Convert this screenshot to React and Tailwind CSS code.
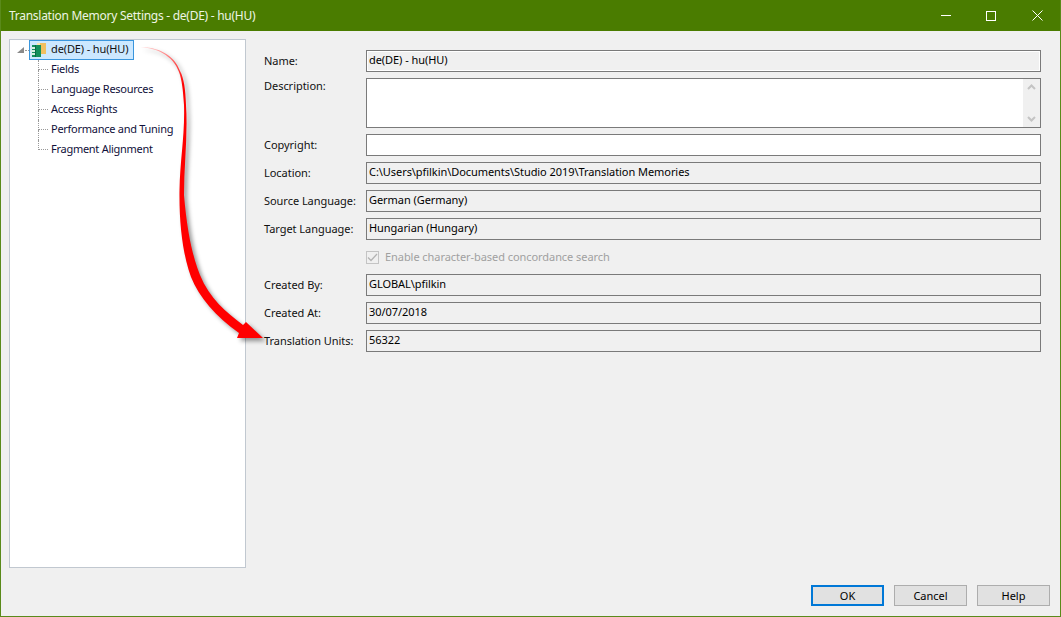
import React from "react";

const treeItems = ["Fields", "Language Resources", "Access Rights", "Performance and Tuning", "Fragment Alignment"];

function Field({ label, value, white }) {
    return (
        <div className="flex items-start">
            <div className="w-[102px] h-[22px] flex items-center text-[11px] text-[#111] tracking-[-0.04px]">{label}</div>
            <div className={`w-[675px] h-[22px] flex items-center border border-[#7a7a7a] pl-[2px] pb-[2px] text-[11px] text-black tracking-[-0.06px] ${white ? "bg-white" : "bg-[#f0f0f0]"}`}>
                {value}
            </div>
        </div>
    );
}

function DbIcon() {
    return (
        <svg width="15" height="14" viewBox="0 0 15 14" className="shrink-0">
            <rect x="6" y="0" width="3" height="11" fill="#fbe6b0" />
            <rect x="9" y="0" width="6" height="11" fill="#f0c060" />
            <rect x="1" y="2" width="9" height="12" fill="#12905c" />
            {/* binder notches */}
            <rect x="0" y="4" width="4" height="2" fill="#d6efe3" />
            <rect x="0" y="7" width="4" height="2" fill="#d6efe3" />
            <rect x="0" y="10" width="4" height="2" fill="#d6efe3" />
            <rect x="4" y="2" width="1" height="12" fill="#0b6b45" />
        </svg>
    );
}

function Tree() {
    return (
        <div className="w-[237px] h-[529px] shrink-0 bg-white border border-[#c1c8d0] text-[11px] text-[#10103a] tracking-[-0.27px]">
            {/* root node */}
            <div className="flex items-center h-5">
                <svg width="7" height="6" viewBox="0 0 7 6" className="ml-[7px] shrink-0">
                    <polygon points="7,0 7,6 0,6" fill="#8a8a8a" />
                </svg>
                <span className="w-[4px] ml-[1px] border-t border-dotted border-[#999]" />
                <div className="w-[105px] h-5 flex items-center bg-[#cce8ff] border border-[#3a96dd] pl-[1px]">
                    <DbIcon />
                    <span className="ml-[5px] text-[#111] pb-[1px] tracking-[-0.13px]">de(DE) - hu(HU)</span>
                </div>
            </div>
            {/* children */}
            {treeItems.map((t, i) => (
                <div key={t} className="flex items-center h-5 pl-[28px]">
                    <div className="w-[10px] h-5 flex flex-col shrink-0">
                        <div className="h-[10px] border-l border-b border-dotted border-[#999]" />
                        <div className={`h-[10px] border-dotted border-[#999] ${i < treeItems.length - 1 ? "border-l" : ""}`} />
                    </div>
                    <span className="ml-[3px] pb-[2px]">{t}</span>
                </div>
            ))}
        </div>
    );
}

function Arrow() {
    return (
        <svg width="1061" height="617" viewBox="0 0 1061 617" className="absolute left-0 top-0 pointer-events-none drop-shadow-[3px_3px_2px_rgba(0,0,0,0.4)]">
            <defs>
                <linearGradient id="fade" gradientUnits="userSpaceOnUse" x1="140" y1="47" x2="182" y2="85">
                    <stop offset="0" stopColor="#ffd8d8" />
                    <stop offset="0.6" stopColor="#ff6060" />
                    <stop offset="1" stopColor="#ff0000" />
                </linearGradient>
            </defs>
            <path
                d="M139,47 C155,48 172,55 178,72 C181,80 182,90 183,105 C184,135 179,160 178.5,190 C178,225 182,255 190,277 C198,297 215,317 238,333 L236,338 L262,338 L245,322 L242,325 C226,313 208,298 199,275 C191,255 186,230 183,195 C183,165 187,135 185,105 C184.5,90 183,78 179,71 C173,54 156,47 139,47 Z"
                fill="url(#fade)"
            />
        </svg>
    );
}

export default function App() {
    return (
        <div className="relative w-[1061px] h-[617px] flex flex-col bg-[#f0f0f0] border-x border-b border-[#5a8a1a] overflow-hidden font-['Noto_Sans',sans-serif]">
            {/* Title bar */}
            <div className="h-[31px] shrink-0 -mx-px flex items-center justify-between bg-[#4a7c00] text-white pl-[9px] pr-px">
                <span className="text-[12px] tracking-[-0.27px] text-[#eef5e4]">Translation Memory Settings - de(DE) - hu(HU)</span>
                <div className="flex items-center">
                    <div className="w-[45px] h-[31px] flex items-center justify-center">
                        <span className="w-[10px] border-t border-white" />
                    </div>
                    <div className="w-[46px] h-[31px] flex items-center justify-center">
                        <span className="w-[10px] h-[10px] border border-white" />
                    </div>
                    <div className="w-[46px] h-[31px] flex items-center justify-center">
                        <svg width="11" height="11" viewBox="0 0 11 11">
                            <path d="M0.5,0.5 L10.5,10.5 M10.5,0.5 L0.5,10.5" stroke="#fff" strokeWidth="1" fill="none" />
                        </svg>
                    </div>
                </div>
            </div>

            {/* Body */}
            <div className="h-[546px] pt-[8px] pl-[8px] flex">
                <Tree />
                <div className="ml-[18px] pt-[11px] flex flex-col gap-[6px]">
                    <div className="flex items-start">
                        <div className="w-[102px] h-[22px] flex items-center text-[11px] text-[#111] tracking-[-0.04px]">Name:</div>
                        <div className="w-[675px] h-[22px] flex items-center border border-[#7a7a7a] shadow-[inset_0_0_0_1px_#fff] pl-[2px] pb-[2px] text-[11px] text-black tracking-[-0.06px]">de(DE) - hu(HU)</div>
                    </div>
                    <div className="flex items-start">
                        <div className="w-[102px] h-[16px] flex items-center text-[11px] text-[#111] tracking-[-0.04px]">Description:</div>
                        <div className="w-[675px] h-[50px] flex justify-end border border-[#7a7a7a] bg-white">
                            <div className="w-[17px] h-full flex flex-col items-center justify-between bg-[#f0f0f0] py-[5px]">
                                <svg width="9" height="6" viewBox="0 0 9 6"><path d="M1,5 L4.5,1.5 L8,5" stroke="#c4c4c4" strokeWidth="2" fill="none" /></svg>
                                <svg width="9" height="6" viewBox="0 0 9 6"><path d="M1,1 L4.5,4.5 L8,1" stroke="#c4c4c4" strokeWidth="2" fill="none" /></svg>
                            </div>
                        </div>
                    </div>
                    <Field label="Copyright:" value="" white />
                    <Field label="Location:" value="C:\Users\pfilkin\Documents\Studio 2019\Translation Memories" />
                    <Field label="Source Language:" value="German (Germany)" />
                    <Field label="Target Language:" value="Hungarian (Hungary)" />
                    <div className="h-[22px] flex items-center pl-[102px]">
                        <span className="w-[13px] h-[13px] flex items-center justify-center border border-[#c4c4c4]">
                            <svg width="11" height="9" viewBox="0 0 11 9"><path d="M1,4.5 L4,7.5 L10,1" stroke="#b4b4b4" strokeWidth="1.3" fill="none" /></svg>
                        </span>
                        <span className="ml-[6px] text-[11px] text-[#a0a0a0] tracking-[-0.06px]">Enable character-based concordance search</span>
                    </div>
                    <Field label="Created By:" value="GLOBAL\pfilkin" />
                    <Field label="Created At:" value="30/07/2018" />
                    <Field label="Translation Units:" value="56322" />
                </div>
            </div>

            {/* Buttons */}
            <div className="flex justify-end gap-[10px] pt-[8px] pr-[10px]">
                <button className="w-[73px] h-[21px] pt-[1px] bg-[#e1e1e1] border-2 border-[#0078d7] text-[11px] text-black">OK</button>
                <button className="w-[73px] h-[21px] pt-[1px] bg-[#e1e1e1] border border-[#adadad] text-[11px] text-black">Cancel</button>
                <button className="w-[73px] h-[21px] pt-[1px] bg-[#e1e1e1] border border-[#adadad] text-[11px] text-black">Help</button>
            </div>

            <Arrow />
        </div>
    );
}
